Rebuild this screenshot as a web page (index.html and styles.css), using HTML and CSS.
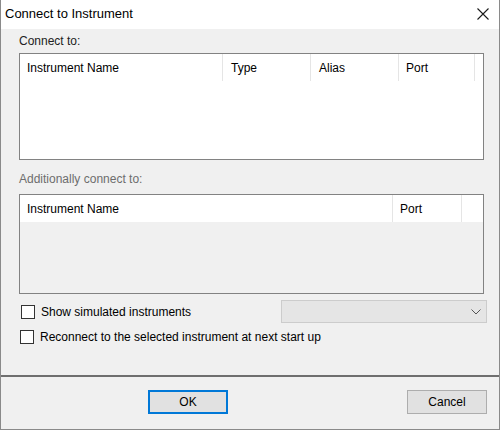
FILE: index.html
```html
<!DOCTYPE html>
<html>
<head>
<meta charset="utf-8">
<link rel="stylesheet" href="styles.css">
</head>
<body>
<div class="window">
  <div class="titlebar">
    <span class="title">Connect to Instrument</span>
    <svg class="close" width="12" height="12" viewBox="0 0 12 12"><path d="M0.5 0.5 L11.5 11.5 M11.5 0.5 L0.5 11.5" stroke="#1a1a1a" stroke-width="1.1" fill="none"/></svg>
  </div>
  <div class="content">
    <div class="label label1">Connect to:</div>
    <div class="list list1">
      <div class="header">
        <div class="col c-name">Instrument Name</div>
        <div class="col c-type">Type</div>
        <div class="col c-alias">Alias</div>
        <div class="col c-port">Port</div>
      </div>
    </div>
    <div class="label label2 disabled">Additionally connect to:</div>
    <div class="list list2">
      <div class="header">
        <div class="col c-name2">Instrument Name</div>
        <div class="col c-port2">Port</div>
      </div>
    </div>
    <div class="row row1">
      <label class="check"><span class="box"></span><span>Show simulated instruments</span></label>
      <div class="combo">
        <svg width="10" height="6" viewBox="0 0 10 6"><path d="M0.5 0.5 L5 5 L9.5 0.5" stroke="#555" stroke-width="1" fill="none"/></svg>
      </div>
    </div>
    <div class="row row2">
      <label class="check"><span class="box"></span><span>Reconnect to the selected instrument at next start up</span></label>
    </div>
  </div>
  <div class="footer">
    <button class="btn ok">OK</button>
    <button class="btn cancel">Cancel</button>
  </div>
</div>
</body>
</html>
```

FILE: styles.css
```css
* { box-sizing: border-box; }
html, body { margin: 0; padding: 0; background: #ffffff; }
body {
  font-family: "Liberation Sans", Arial, sans-serif;
  font-size: 12px;
  color: #000;
}
.window {
  width: 500px;
  height: 430px;
  border-left: 1px solid #8a8a8a;
  border-right: 1px solid #8a8a8a;
  border-bottom: 1px solid #8a8a8a;
  display: flex;
  flex-direction: column;
  background: #f0f0f0;
}
.titlebar {
  height: 29px;
  background: #ffffff;
  display: flex;
  align-items: center;
  justify-content: space-between;
  padding: 0 10px 0 4px;
}
.title { font-size: 13px; color: #000; padding-bottom: 2px; }
.close { margin-top: -2px; }
.content {
  height: 346px;
  padding: 0 15px 0 18px;
  display: flex;
  flex-direction: column;
}
.label { height: 14px; line-height: 14px; color: #222; }
.label1 { margin-top: 5px; }
.label2 { margin-top: 12px; }
.disabled { color: #6d6d6d; }
.list {
  border: 1px solid #828282;
  margin-top: 5px;
  background: #ffffff;
}
.list1 { height: 107px; }
.list2 { height: 100px; margin-top: 8px; background: #f0f0f0; }
.header {
  height: 27px;
  display: flex;
  background: #ffffff;
}
.col {
  border-right: 1px solid #e5e5e5;
  padding-left: 7px;
  height: 27px;
  line-height: 29px;
  white-space: nowrap;
}
.c-name { width: 203px; }
.c-type { width: 88px; padding-left: 8px; }
.c-alias { width: 88px; padding-left: 8px; }
.c-port { width: 76px; }
.c-name2 { width: 373px; }
.c-port2 { width: 69px; }
.row { display: flex; align-items: center; }
.row1 { margin-top: 6px; height: 23px; justify-content: space-between; }
.row2 { margin-top: 6px; height: 16px; }
.check { display: flex; align-items: center; gap: 6px; }
.row1 .check { padding-left: 2px; }
.row2 .check { padding-left: 1px; }
.box {
  width: 14px;
  height: 14px;
  border: 1px solid #333;
  background: #ffffff;
  display: inline-block;
}
.combo {
  width: 206px;
  height: 23px;
  background: #e5e5e5;
  border: 1px solid #cccccc;
  margin-right: -3px;
  display: flex;
  align-items: center;
  justify-content: flex-end;
  padding-right: 5px;
}
.footer {
  flex: 1;
  border-top: 2px solid #6e6e6e;
  display: flex;
  align-items: flex-start;
  justify-content: space-between;
  padding: 13px 12px 0 147px;
}
.btn {
  font-family: "Liberation Sans", Arial, sans-serif;
  font-size: 12px;
  height: 24px;
  width: 80px;
  background: #e1e1e1;
  border: 1px solid #adadad;
  color: #000;
  padding: 0;
}
.ok { border: 2px solid #0078d7; width: 80px; }
```
